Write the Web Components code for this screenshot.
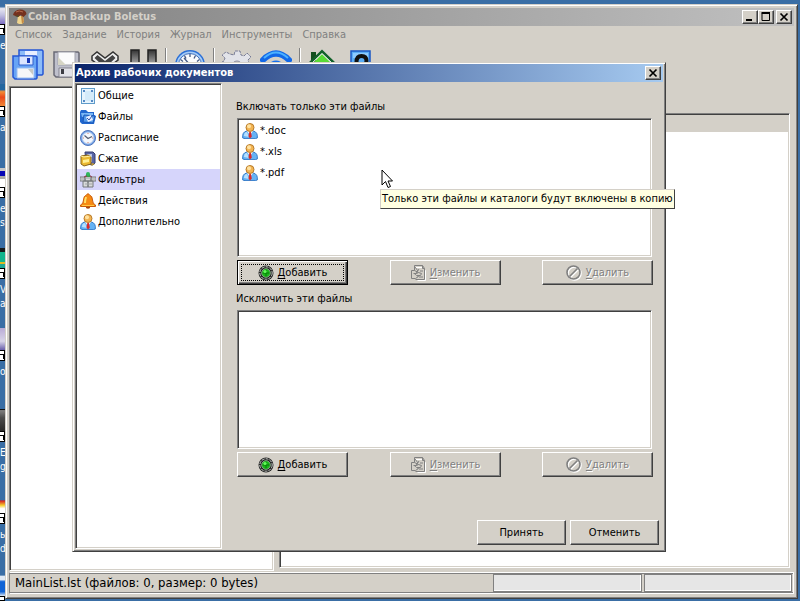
<!DOCTYPE html>
<html lang="ru">
<head>
<meta charset="utf-8">
<title>Cobian Backup Boletus</title>
<style>
html, body { height: 100%; margin: 0; }
body {
  --face: #d4d0c8; --dark: #404040; --shade: #808080; --light: #fff;
  background: #3a6ea5; color: #000; overflow: hidden;
  font: 11px/16px "DejaVu Sans Condensed", "DejaVu Sans", sans-serif;
}
</style>
</head>
<body>
<backup-desktop></backup-desktop>
<script>
const ICONS = {
  mushroom: ['0 0 16 16', `<path d="M6 7h5l1 6-2 2H7l-2-1z" fill="#efd48e"/><path d="M9 7h2l1 6-2 2z" fill="#c58b45"/><path d="M1 6q1-5 7-5.500q6 0 6.500 4.500l-3 3-3-2-2 2-3-1z" fill="#74301d"/><path d="M4 3q3-2 7 0" stroke="#b46a4c" fill="none"/><path d="M3 7l3 1 1-2z" fill="#48502a"/>`],
  min: ['0 0 10 10', `<path d="M1 7h6v2H1z"/>`],
  max: ['0 0 10 10', `<path d="M1 1.500h7.500v7H1z" fill="none" stroke="#000"/><path d="M.5 0h8.500v2H.5z"/>`],
  close: ['0 0 10 10', `<path d="M1.500 1.500l7 7M8.500 1.500l-7 7" stroke="#000" stroke-width="1.700"/>`],
  saveall: ['0 0 32 32', `<path d="M7 1h23l1 1v23l-1 1H9l-2-2z" fill="#8dbcf8" stroke="#2456d4" stroke-width="1.500"/><path d="M13 2h12v5H13z" fill="#e8efff"/><path d="M1 7h23l1 1v21l-1 1H3l-2-2z" fill="#68a4f5" stroke="#2456d4" stroke-width="1.500"/><path d="M7 7h14v9H7z" fill="#dbe5ff" stroke="#2f5fce"/><path d="M15 9h3v5h-3z" fill="#1637b6"/><path d="M5 19h17v10H5z" fill="#f5f6f8" stroke="#9cbef0"/><path d="M16 20h5v6z" fill="#c7c8c3"/>`],
  save: ['0 0 32 32', `<path d="M4 3h24l1 1v23l-1 1H6l-2-2z" fill="#bfc0cc" stroke="#696975" stroke-width="1.500"/><path d="M8 3h17v13H8z" fill="#fbfbfc" stroke="#a0a1ab"/><path d="M8 8v8h8z" fill="#d6d5c5"/><path d="M9 19h14v9H9z" fill="#e2e2e8" stroke="#858590"/><path d="M11 20h3v5h-3z" fill="#3c3c43"/>`],
  cross: ['0 0 32 32', `<path d="M4 7l5-4 8 6 8-6 5 4v4l-8 6 7 7-5 5-7-7-7 7-5-5 7-7-8-6z" fill="#eee" stroke="#333" stroke-width="1.500"/><path d="M6.500 9l3-3L17 12l7.500-6 3 3-8 7.500 7 7-3 3-6.500-7-6.500 7-3-3 7-7z" fill="#444"/>`],
  pause: ['0 0 32 32', `<defs><linearGradient id="g" x2="0" y2="1"><stop stop-color="#333"/><stop offset=".5" stop-color="#aaa"/></linearGradient></defs><path d="M5 1h8v29H5zM22 1h8v29h-8z" fill="url(#g)" stroke="#222" stroke-width="1.500"/>`],
  gauge: ['0 0 32 32', `<circle cx="16" cy="16" r="15" fill="#2b6fd6"/><circle cx="16" cy="16" r="13.500" fill="#a7cdf7"/><circle cx="16" cy="16" r="11.500" fill="#fafbfd" stroke="#3e6fbb"/><path d="M16 5v3M10.500 6.500l1.500 3M21.500 6.500l-1.500 3M6.500 10.500l2.500 2M25.500 10.500l-2.500 2M10 9l7 8" stroke="#455a83" stroke-width="1.300"/>`],
  gear: ['0 0 32 32', `<path d="M12 6l1-4h5l1 4 3 1 3-3 4 4-3 3 1 3 4 1v5l-4 1-1 3 2 4-4 3-4-2-3 1-1 3h-4l-2-4-3-1-4 2-3-4 2-4-1-3-3-1v-4l4-2 1-3-3-3 4-3 4 2z" fill="#e2e3e9" stroke="#777b95" stroke-dasharray="3 1"/><circle cx="15" cy="17" r="5" fill="#d4d0c8" stroke="#8a8ca0"/>`],
  wifi: ['0 0 32 32', `<path d="M3 11q13-13 26 0" stroke="#1268e8" stroke-width="6" fill="none" stroke-linecap="round"/><path d="M4 9q12-11 24 0" stroke="#4db2ff" stroke-width="2" fill="none"/><path d="M9 18q7-8 14 0" stroke="#1670ee" stroke-width="5" fill="none" stroke-linecap="round"/><circle cx="16" cy="25" r="4" fill="#1268e8"/>`],
  house: ['0 0 32 32', `<path d="M3 3h5v10H3z" fill="#14501f"/><path d="M14 5l11 11v13H3V16z" fill="#59db36"/><path d="M0 16L14 2.500 28 16" fill="none" stroke="#12612a" stroke-width="3"/><path d="M1 17L14 4.500l13 12.500" fill="none" stroke="#fff" stroke-width="1"/>`],
  help: ['0 0 32 32', `<path d="M5 2h19v28H5z" fill="#5badf5" stroke="#1a57c4" stroke-width="1.500"/><path d="M7 4h15v5H7z" fill="#8dcaff"/><path d="M10.500 13q0-6 5-6t5 5q0 3-5 6v3" fill="none" stroke="#111" stroke-width="4"/>`],
  general: ['0 0 16 16', `<path d="M1 0h14v16H1z" fill="#5f9bc9"/><path d="M2 1h12v14H2z" fill="#e6f4fd"/><path d="M5 3h9v10H5z" fill="#d4ebfa"/><path d="M3 2h2v2H3zM11 2h2v2h-2zM3 12h2v2H3zM11 12h2v2h-2z" fill="#5489c5"/>`],
  files: ['0 0 16 16', `<path d="M0 3l1-2h5l2 2h6v3l2 1-2 8-12 0-2-2z" fill="#2268cf"/><path d="M1 4h12v2L2 8z" fill="#7ab8f6"/><path d="M4 6l11 1-2 7-10-1z" fill="#559be9" stroke="#1857ba"/><path d="M6 8l5-2 2 5-5 2z" fill="#e8efff"/><path d="M7 9l2 2 3-4" stroke="#3056ae" fill="none"/>`],
  clock: ['0 0 16 16', `<circle cx="8" cy="8" r="7.500" fill="#76a6e8" stroke="#5276bd"/><circle cx="8" cy="8" r="5.700" fill="#f4f8fe" stroke="#b9cdec"/><path d="M4.500 5.500L8 8.500l4-2" fill="none" stroke="#555c70" stroke-width="1.200"/><path d="M8 3v1M8 12v1M3 8h1M12 8h1" stroke="#d98473"/>`],
  zip: ['0 0 16 16', `<path d="M5 1h8l2 2v9l-2 2-7-1z" fill="#5865a6" stroke="#373e70"/><path d="M7 3h5v8H7z" fill="#b4c1e9"/><path d="M1 5l7-1 3 2v7l-7 2-3-2z" fill="#eab932" stroke="#89651b"/><path d="M1 5l3 1 7-1" stroke="#fff0a4" fill="none"/><path d="M3 9l6-1v3l-6 1z" fill="#fff097"/><path d="M12 12l3 1-4 2z" fill="#c59c2d"/>`],
  filter: ['0 0 16 16', `<path d="M0 5h5v4H0zM5 4h6v5H5zM11 5h5v4h-5zM3 9h5v6H3zM8 9h5v6H8z" fill="#d9dada" stroke="#74787a"/><path d="M5 6h6M1 7h3M12 7h3M5 12h7" stroke="#a1a5a7"/><path d="M6 2h4v3H6z" fill="#39994d"/><circle cx="8" cy="2" r="2" fill="#2fb85b"/><path d="M4 5l3-1M12 5l-2-1" stroke="#963f4e"/>`],
  bell: ['0 0 16 16', `<circle cx="8" cy="13.500" r="2.300" fill="#a9460b"/><path d="M6.500 2q1.500-3 3 0 3 1 3 5 0 4 3 5v1.500H.5V12q3-1 3-5 0-4 3-5z" fill="#f68a13" stroke="#c95a08"/><path d="M6 4q-1 3-1 6" stroke="#ffe066" stroke-width="2" fill="none"/><path d="M2 12.500h12" stroke="#ffca48"/>`],
  user: ['0 0 16 16', `<path d="M.7 15q-.7-6 4-7h6.600q4.700 1 4 7l-2 .6H3z" fill="#65b2f4" stroke="#347bc9"/><path d="M2 13q0-4 3-4l2 5z" fill="#b5e0ff"/><path d="M5 8l3 4 3-4z" fill="#fff"/><path d="M7.300 9h1.600l.9 4.500L8 15.500l-1.500-2z" fill="#d9292b"/><circle cx="8" cy="4.500" r="4" fill="#f2b453" stroke="#b77b2b"/><circle cx="7" cy="3.200" r="2" fill="#ffe2a0"/>`],
  add: ['0 0 16 16', `<circle cx="8" cy="8" r="7.500" fill="#222"/><circle cx="8" cy="8" r="6.200" fill="none" stroke="#ccd0cc" stroke-dasharray="3 1"/><circle cx="8" cy="8" r="4.300" fill="#17b817" stroke="#85a485"/><path d="M8 4.500v7M4.500 8h7" stroke="#087a0b"/><circle cx="7" cy="6.500" r="1.600" fill="#65fb5b"/>`],
  edit: ['0 0 16 16', `<g fill="none" stroke="#fff" transform="translate(1 1)"><path d="M4.500 1.500h7l3 3v10h-8"/></g><g fill="none" stroke="#808080"><path d="M4.500 5.500v-5h8l2 3v11h-9M12.500.5v3h2M1.500 5.500h3l4 2-2 1h-3M1.500 5.500v8h4l3-2-2-1h4l1-2-3-1M5 2l3 4M9 4l-4 6M9 12h4M10 6h3"/></g>`],
  deny: ['0 0 16 16', `<g fill="none" stroke-width="1.600"><g stroke="#fff" transform="translate(1 1)"><circle cx="7.500" cy="7.500" r="6.500"/><path d="M3.500 11.500l8-8"/></g><g stroke="#808080"><circle cx="7.500" cy="7.500" r="6.500"/><path d="M3.500 11.500l8-8"/></g></g>`],
  pointer: ['0 0 12 20', `<path d="M1 1v15l3.500-3.500L7 18.500l2.500-1-2.500-5.500h4.500z" fill="#fff" stroke="#000"/>`]
};

customElements.define('ui-icon', class extends HTMLElement {
  static observedAttributes = ['name'];
  constructor() {
    super();
    this.attachShadow({ mode: 'open' });
  }
  attributeChangedCallback(attr, old, name) {
    const [box, art] = ICONS[name];
    this.shadowRoot.innerHTML = `<style>:host{display:block;flex:none;width:16px;height:16px}svg{display:block;width:100%;height:100%}</style><svg viewBox="${box}" aria-hidden="true">${art}</svg>`;
  }
});

function define(name, css, html, setup) {
  const tpl = document.createElement('template');
  tpl.innerHTML = `<style>:host,*{box-sizing:border-box}${css}</style>${html}`;
  customElements.define(name, class extends HTMLElement {
    constructor() {
      super();
      this.attachShadow({ mode: 'open' }).append(tpl.content.cloneNode(true));
    }
    connectedCallback() { if (setup) setup(this, this.shadowRoot); }
  });
}
const RAISED = 'border:1px solid;border-color:var(--light) var(--dark) var(--dark) var(--light);box-shadow:inset -1px -1px var(--shade);';
const SUNKEN = 'border:1px solid;border-color:var(--shade) var(--light) var(--light) var(--shade);box-shadow:inset 1px 1px var(--dark),inset -1px -1px var(--face);';

define('caption-button', `:host{display:block;width:16px;height:14px}
button{display:flex;align-items:center;justify-content:center;width:100%;height:100%;padding:0;background:var(--face);${RAISED}}
ui-icon{width:10px;height:10px}`, '<button type="button"><ui-icon></ui-icon></button>', (el, root) => {
  root.querySelector('ui-icon').setAttribute('name', el.getAttribute('icon'));
  root.querySelector('button').setAttribute('aria-label', el.getAttribute('label'));
});

define('title-bar', `:host{display:flex;align-items:center;height:18px;flex:none;padding:0 2px 0 1px;background:linear-gradient(90deg,#0a246a,#a6caf0);color:#fff;font-weight:bold}
:host([inactive]){background:linear-gradient(90deg,#808080,#c0c0c0);color:#d4d0c8;padding-left:3px}
.text{flex:1;white-space:nowrap}.buttons{display:flex}`,
'<slot name="icon"></slot><span class="text"><slot></slot></span><div class="buttons"><slot name="buttons"></slot></div>');

define('menu-strip', ':host{display:flex;gap:10px;height:18px;padding-left:6px;flex:none;color:#808080;align-items:center}', '<slot></slot>');
define('menu-entry', ':host{display:block}button{display:block;border:0;padding:0;background:none;font:inherit;color:inherit}', '<button type="button" disabled><slot></slot></button>');

define('tool-strip', ':host{display:flex;height:42px;align-items:center;flex:none}', '<slot></slot>');
define('tool-button', `:host{display:block;width:38px}button{display:flex;width:100%;padding:0;border:0;background:none;justify-content:center}
ui-icon{width:32px;height:32px}`, '<button type="button"><ui-icon></ui-icon></button>', (el, root) => {
  root.querySelector('ui-icon').setAttribute('name', el.getAttribute('icon'));
  root.querySelector('button').setAttribute('aria-label', el.getAttribute('label'));
});
define('tool-divider', ':host{display:block;width:10px;height:34px;padding-left:4px}i{display:block;width:2px;height:100%;background:var(--shade);border-right:1px solid #fff}', '<i></i>');

define('sunken-box', `:host{display:block;background:#fff;padding:1px;${SUNKEN}}`, '<slot></slot>');

define('list-row', `:host{display:block}
button{display:flex;align-items:center;gap:2px;width:100%;height:21px;padding:0 3px;border:0;background:none;font:inherit;color:inherit;text-align:left}
:host([selected]) button{background:#d6d5fb}`, '<button type="button"><ui-icon></ui-icon><span><slot></slot></span></button>', (el, root) => {
  root.querySelector('ui-icon').setAttribute('name', el.getAttribute('icon'));
});

define('push-button', `:host{display:block;width:111px;height:25px}
button{position:relative;display:flex;align-items:center;justify-content:center;gap:4px;width:100%;height:100%;padding:0;background:var(--face);font:inherit;color:#000;${RAISED}}
:host([dialog]){width:89px}
:host([default]) button{border-color:#000;box-shadow:inset 1px 1px #fff,inset -1px -1px var(--dark),inset -2px -2px var(--shade)}
:host([default]) button::after{content:"";position:absolute;inset:3px;border:1px dotted #000}
:host([disabled]) button{color:#808080;text-shadow:1px 1px #fff}
u{text-underline-offset:2px}`, '<button type="button"><span></span></button>', (el, root) => {
  const button = root.querySelector('button');
  const text = el.getAttribute('text');
  const span = root.querySelector('span');
  span.innerHTML = el.hasAttribute('icon') ? `<u>${text[0]}</u>${text.slice(1)}` : text;
  if (el.hasAttribute('icon')) {
    const icon = document.createElement('ui-icon');
    icon.setAttribute('name', el.getAttribute('icon'));
    button.prepend(icon);
  }
  button.disabled = el.hasAttribute('disabled');
});

define('filter-group', `:host{display:flex;flex-direction:column;gap:3px;flex:1;min-height:0}
sunken-box{flex:1;margin:0 1px;min-height:0}.actions{display:flex;justify-content:space-between;margin-left:1px}`,
`<div class="label"></div><sunken-box role="group"><slot></slot></sunken-box>
<div class="actions"><push-button icon="add" text="Добавить"></push-button><push-button icon="edit" text="Изменить" disabled></push-button><push-button icon="deny" text="Удалить" disabled></push-button></div>`, (el, root) => {
  root.querySelector('.label').textContent = el.getAttribute('label');
  root.querySelector('sunken-box').setAttribute('aria-label', el.getAttribute('label'));
  root.querySelector('push-button').toggleAttribute('default', el.hasAttribute('focused'));
});

define('task-dialog', `:host{display:flex;flex-direction:column;background:var(--face);padding:1px;border:1px solid;border-color:var(--face) var(--dark) var(--dark) var(--face);box-shadow:inset 1px 1px #fff,inset -1px -1px var(--shade)}
.frame{display:flex;flex-direction:column;gap:1px;flex:1;padding:0 1px 1px;min-height:0}
.body{display:flex;flex:1;min-height:0}
nav{flex:none;width:147px;display:flex}
nav sunken-box{flex:1}
main{flex:1;display:flex;flex-direction:column;min-width:0}
.groups{flex:1;display:flex;flex-direction:column;gap:6px;padding:16px 10px 43px 14px;min-height:0}
footer{display:flex;justify-content:flex-end;gap:4px;padding:0 4px 4px}`,
`<div class="frame"><title-bar>Архив рабочих документов<caption-button slot="buttons" icon="close" label="Закрыть"></caption-button></title-bar>
<div class="body"><nav><sunken-box>
<list-row icon="general">Общие</list-row><list-row icon="files">Файлы</list-row><list-row icon="clock">Расписание</list-row><list-row icon="zip">Сжатие</list-row><list-row icon="filter" selected>Фильтры</list-row><list-row icon="bell">Действия</list-row><list-row icon="user">Дополнительно</list-row>
</sunken-box></nav>
<main><div class="groups">
<filter-group label="Включать только эти файлы" focused><list-row icon="user">*.doc</list-row><list-row icon="user">*.xls</list-row><list-row icon="user">*.pdf</list-row></filter-group>
<filter-group label="Исключить эти файлы"></filter-group></div>
<footer><push-button dialog text="Принять"></push-button><push-button dialog text="Отменить"></push-button></footer></main></div></div>`);

define('status-strip', `:host{display:flex;align-items:center;gap:2px;height:22px;flex:none;margin:1px 0;padding:1px;border:1px solid;border-color:#fff #fff #fff var(--shade);box-shadow:inset 0 1px var(--shade),inset 0 -1px var(--shade)}
.text{flex:1;font-size:13px;padding-left:4px;white-space:nowrap}
.meter{width:19%;height:18px;background:#e6e6e6;border:1px solid var(--shade);box-shadow:inset -1px -1px #fff}`,
'<span class="text"><slot></slot></span><div class="meter"></div><div class="meter"></div>');

define('main-window', `:host{display:flex;flex-direction:column;background:var(--face);padding:3px;min-width:0;border:1px solid;border-color:var(--face) var(--dark) var(--dark) var(--face);box-shadow:inset 1px 1px #fff,inset -1px -1px var(--shade)}
.panes{display:flex;flex:1;gap:5px;min-height:0;padding-right:4px}
.left{flex:34}.right{flex:66;margin:27px 0 3px}
.head{height:17px;background:var(--face)}
caption-button:last-of-type{margin-left:2px}`,
`<title-bar inactive><ui-icon slot="icon" name="mushroom"></ui-icon>Cobian Backup Boletus<caption-button slot="buttons" icon="min" label="Свернуть"></caption-button><caption-button slot="buttons" icon="max" label="Развернуть"></caption-button><caption-button slot="buttons" icon="close" label="Закрыть"></caption-button></title-bar>
<menu-strip><menu-entry>Список</menu-entry><menu-entry>Задание</menu-entry><menu-entry>История</menu-entry><menu-entry>Журнал</menu-entry><menu-entry>Инструменты</menu-entry><menu-entry>Справка</menu-entry></menu-strip>
<tool-strip><tool-button icon="saveall" label="Сохранить все"></tool-button><tool-button icon="save" label="Сохранить"></tool-button><tool-button icon="cross" label="Отмена"></tool-button><tool-button icon="pause" label="Пауза"></tool-button><tool-divider></tool-divider><tool-button icon="gauge" label="Расписание"></tool-button><tool-divider></tool-divider><tool-button icon="gear" label="Настройки"></tool-button><tool-button icon="wifi" label="Сеть"></tool-button><tool-divider></tool-divider><tool-button icon="house" label="Сайт"></tool-button><tool-button icon="help" label="Помощь"></tool-button></tool-strip>
<div class="panes"><sunken-box class="left"></sunken-box><sunken-box class="right"><div class="head"></div></sunken-box></div>
<status-strip>MainList.lst (файлов: 0, размер: 0 bytes)</status-strip>`);

define('desktop-shortcut', `:host{display:block;position:absolute;left:0;width:5px;color:#fff;font-size:10px;line-height:14px}
.art{height:22px;background:var(--art)}
.arrow{display:block;width:5px;height:11px;background:#fff;border:1px solid #000;border-left:0;padding:3px 1px 0 0}
.arrow::after{content:"";display:block;width:3px;height:4px;border:solid #000;border-width:1px 1px 0 0}
.name{padding-top:4px;white-space:pre-line}`,
'<div class="art"></div><i class="arrow"></i><div class="name"><slot></slot></div>');

define('hint-tip', ':host{display:block;background:#ffffe1;border:1px solid;border-color:var(--face) var(--dark) var(--dark) var(--face);padding:1px;white-space:nowrap}', '<slot></slot>');

define('backup-desktop', `:host{display:flex;height:100%;position:relative;overflow:hidden;padding:4px 2px 2px 5px}
main-window{flex:1;position:relative}
task-dialog{position:absolute;inset:62px 134px 49px 72px}
hint-tip{position:absolute;left:380px;top:189px}
.pointer{position:absolute;left:381px;top:169px;width:12px;height:20px}`,
`<desktop-shortcut style="top:2px;--art:linear-gradient(#3a6ea5 20%,#e7e7f2 30%,#c0bfe0 60%,#7e70c4)">e</desktop-shortcut>
<desktop-shortcut style="top:84px;--art:linear-gradient(#2467a0 25%,#f28c35 35%,#e9491b 60%,#f08735)">a</desktop-shortcut>
<desktop-shortcut style="top:165px;--art:linear-gradient(#3a6ea5 15%,#c9c9c9 15% 28%,#0505b5 28% 50%,#aaa 50% 62%,#fff 62%)">e
s</desktop-shortcut>
<desktop-shortcut style="top:246px;--art:linear-gradient(#3a6ea5 10%,#161a1a 10% 25%,#12b58d 25% 75%,#dfba21 75% 82%,#1fa795 82%)">V
a</desktop-shortcut>
<desktop-shortcut style="top:328px;--art:linear-gradient(#b9abd6,#d8d4e8 60%,#685daa)">o</desktop-shortcut>
<desktop-shortcut style="top:409px;--art:linear-gradient(#111 5%,#777 5% 12%,#4b4b4b 40%,#292929)">E
g</desktop-shortcut>
<desktop-shortcut style="top:491px;--art:linear-gradient(#3a6ea5 40%,#d52222 45%,#f7ce2e 65%,#fff 80%)">ь
d</desktop-shortcut>
<desktop-shortcut style="top:574px;--art:linear-gradient(#3a6ea5 5%,#dfe9f5 10% 25%,#0f63d6 35% 80%,#dfe9f5)"></desktop-shortcut>
<main-window></main-window><task-dialog></task-dialog><hint-tip role="tooltip">Только эти файлы и каталоги будут включены в копию</hint-tip><ui-icon class="pointer" name="pointer"></ui-icon>`);
</script>
</body>
</html>
